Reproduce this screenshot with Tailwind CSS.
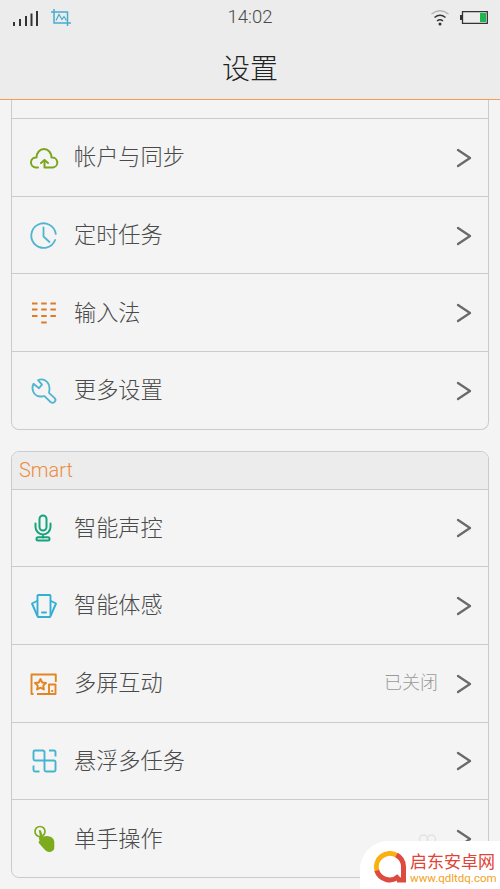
<!doctype html>
<html lang="zh-CN">
  <head>
    <meta charset="UTF-8" />
    <meta name="viewport" content="width=device-width, initial-scale=1.0" />
    <title>设置</title>
    <script src="https://cdn.jsdelivr.net/npm/@tailwindcss/browser@4"></script>
  </head>
  <body class="relative flex h-[889px] w-[500px] flex-col overflow-hidden bg-[#f4f4f4] font-['Roboto','Noto_Sans_CJK_SC',sans-serif] font-light text-[#4a4a4a]">
    <header class="h-[99px] shrink-0 bg-[#ececec]">
      <div class="grid h-[35px] grid-cols-3 items-center pr-3 pl-3">
        <div class="flex items-center gap-3">
          <svg class="h-4 w-[27px]" viewBox="0 0 27 16" fill="#333">
            <path d="M1 12h2v4H1zM7 9h2v7H7zM13 6h2v10h-2zM18.500 3.500h2v12.500h-2zM24 1h2v15h-2z" />
          </svg>
          <svg class="h-[17px] w-5" viewBox="0 0 20 17" fill="none" stroke="#46acd2" stroke-width="1.500">
            <path d="M0 3h16.500v14M3 0v14h17" />
            <path d="M5 11.500l3-6 3 5 2-3 2.500 4" stroke-width="1.200" />
          </svg>
        </div>
        <span class="text-center text-[18.500px]">14:02</span>
        <div class="flex items-center justify-end gap-[11px]">
          <svg class="h-4 w-[18px]" viewBox="0 0 18 16" fill="none" stroke="#333" stroke-width="1.500">
            <path d="M.5 4Q9-2.500 17.500 4" stroke="#b5b5b5" />
            <path d="M3.500 7.500Q9 3 14.500 7.500M6 11Q9 8.500 12 11" />
            <circle cx="9" cy="14" r="1.500" fill="#333" stroke="none" />
          </svg>
          <svg class="h-[13px] w-7" viewBox="0 0 28 13">
            <path d="M0 4h2v5H0z" fill="#333" />
            <path d="M2.500.7h24.800v11.600H2.500z" fill="none" stroke="#333" stroke-width="1.300" />
            <path d="M20 2h6v9h-6z" fill="#1fb64f" />
          </svg>
        </div>
      </div>
      <h1 class="mt-[14px] text-center text-[28px] leading-[42px] text-[#222]">设置</h1>
    </header>
    <div class="h-px shrink-0 bg-[#f79a55]"></div>

    <main class="flex flex-col gap-[21px] px-[11px]">
      <section class="h-[330px] rounded-b-lg border border-t-0 border-[#cbcbcb] text-[22.200px]">
        <div class="h-[19px] border-b border-[#cbcbcb]"></div>
        <div class="flex h-[77.6px] items-center border-b border-[#cbcbcb] pt-px pr-4 pl-[17px]">
          <svg class="size-[30px]" viewBox="0 0 30 30" fill="none" stroke="#7ba51c" stroke-width="2" stroke-linecap="round" stroke-linejoin="round">
            <path d="M9 24.500H6.500A4.700 4.700 0 0 1 7.500 14.500 7.500 8.500 0 0 1 22.500 14.500a4.700 4.700 0 0 1 1.500 10H15.500V17.500" />
            <path d="M12 20l3.500-3 3.500 3" />
          </svg>
          <span class="ml-[15px] flex-1">帐户与同步</span>
          <svg class="h-5 w-4" viewBox="0 0 16 20" fill="none" stroke="#6a6a6a" stroke-width="2.300" stroke-linecap="round" stroke-linejoin="round"><path d="M2 2l12 8-12 8" /></svg>
        </div>
        <div class="flex h-[77.6px] items-center border-b border-[#cbcbcb] pt-0.5 pr-4 pl-[17px]">
          <svg class="size-[30px]" viewBox="0 0 30 30" fill="none" stroke="#51b4d1" stroke-width="1.800" stroke-linecap="round" stroke-linejoin="round">
            <path d="M26.800 13A12.300 12.300 0 1 0 26.100 19" />
            <path d="M14.500 6.500v9l6 5.500" />
          </svg>
          <span class="ml-[15px] flex-1">定时任务</span>
          <svg class="h-5 w-4" viewBox="0 0 16 20" fill="none" stroke="#6a6a6a" stroke-width="2.300" stroke-linecap="round" stroke-linejoin="round"><path d="M2 2l12 8-12 8" /></svg>
        </div>
        <div class="flex h-[77.6px] items-center border-b border-[#cbcbcb] pt-0.5 pr-4 pl-[17px]">
          <svg class="size-[30px]" viewBox="0 0 30 30" fill="none" stroke="#dd7b2b" stroke-width="2" stroke-dasharray="5.500 3.700">
            <path d="M3 5.500h24M3 11.500h24M3 18h24M12.200 24.500h5.500" />
          </svg>
          <span class="ml-[15px] flex-1">输入法</span>
          <svg class="h-5 w-4" viewBox="0 0 16 20" fill="none" stroke="#6a6a6a" stroke-width="2.300" stroke-linecap="round" stroke-linejoin="round"><path d="M2 2l12 8-12 8" /></svg>
        </div>
        <div class="flex h-[77.6px] items-center pt-px pr-4 pl-[17px]">
          <svg class="size-[30px]" viewBox="0 0 30 30" fill="none" stroke="#51b4d1" stroke-width="1.800" stroke-linecap="round" stroke-linejoin="round">
            <path d="M9 4.200l4 4.500-3 3.500-5.500-4.500C2 13 4.500 19.800 11 20.500c2 .2 3.500-.7 4.500-.3l6 5.800c3 2.300 6.500-1.200 4.200-3.800l-5.500-5c-.6-1.200.6-3 .3-5.200C20 5 13.500 1.800 9 4.200z" />
          </svg>
          <span class="ml-[15px] flex-1">更多设置</span>
          <svg class="h-5 w-4" viewBox="0 0 16 20" fill="none" stroke="#6a6a6a" stroke-width="2.300" stroke-linecap="round" stroke-linejoin="round"><path d="M2 2l12 8-12 8" /></svg>
        </div>
      </section>

      <section class="h-[427px] overflow-hidden rounded-lg border border-[#cbcbcb] text-[22.200px]">
        <h2 class="h-[38px] border-b border-[#cbcbcb] bg-[#ececec] pl-[7px] text-xl leading-[37px] text-[#ec8c40]">Smart</h2>
        <div class="flex h-[77.4px] items-center border-b border-[#cbcbcb] pr-4 pl-[17px]">
          <svg class="size-[30px]" viewBox="0 0 30 30" fill="none" stroke="#17a37c" stroke-width="2" stroke-linecap="round" stroke-linejoin="round">
            <rect x="10.500" y="2.500" width="7" height="15" rx="3.500" />
            <path d="M6.500 10.500v3.500a7.500 7.500 0 0 0 15 0v-3.500M14 21.500v3" />
            <rect x="7.500" y="24.300" width="13" height="3.200" rx="1.500" />
          </svg>
          <span class="ml-[15px] flex-1">智能声控</span>
          <svg class="h-5 w-4" viewBox="0 0 16 20" fill="none" stroke="#6a6a6a" stroke-width="2.300" stroke-linecap="round" stroke-linejoin="round"><path d="M2 2l12 8-12 8" /></svg>
        </div>
        <div class="flex h-[77.6px] items-center border-b border-[#cbcbcb] pr-4 pl-[17px]">
          <svg class="size-[30px]" viewBox="0 0 30 30" fill="none" stroke="#35aed4" stroke-width="1.900" stroke-linecap="round" stroke-linejoin="round">
            <rect x="8.500" y="4" width="13" height="22" rx=".8" />
            <path d="M8 10l-5 2.500 5 11.500M22 10l5 2.500-5 11.500M13 21.500h4" />
          </svg>
          <span class="ml-[15px] flex-1">智能体感</span>
          <svg class="h-5 w-4" viewBox="0 0 16 20" fill="none" stroke="#6a6a6a" stroke-width="2.300" stroke-linecap="round" stroke-linejoin="round"><path d="M2 2l12 8-12 8" /></svg>
        </div>
        <div class="flex h-[77.6px] items-center border-b border-[#cbcbcb] pt-px pr-4 pl-[17px]">
          <svg class="size-[30px]" viewBox="0 0 30 30" fill="none" stroke="#e28522" stroke-width="1.900" stroke-linejoin="round">
            <path d="M4.500 25H2.500V5.500h24.300V13M8 25h12" />
            <path d="M11.500 10l1.700 3.500 3.800.5-2.800 2.600.7 3.900-3.400-1.900-3.400 1.900.7-3.900L6 14l3.800-.5z" />
            <rect x="20" y="15.500" width="6.500" height="9.500" />
            <path d="M22.200 22h2" />
          </svg>
          <span class="ml-[15px] flex-1">多屏互动</span>
          <span class="mr-[18px] pb-px text-lg leading-6 text-[#999]">已关闭</span>
          <svg class="h-5 w-4" viewBox="0 0 16 20" fill="none" stroke="#6a6a6a" stroke-width="2.300" stroke-linecap="round" stroke-linejoin="round"><path d="M2 2l12 8-12 8" /></svg>
        </div>
        <div class="flex h-[77.6px] items-center border-b border-[#cbcbcb] pt-px pr-4 pl-[17px]">
          <svg class="size-[30px]" viewBox="0 0 30 30" fill="none" stroke="#45b4d2" stroke-width="1.900">
            <path d="M15.500 14.500H6a1.500 1.500 0 0 1-1.500-1.500V6A1.500 1.500 0 0 1 6 4.500h8A1.500 1.500 0 0 1 15.500 6zM15.500 14.500H25a1.500 1.500 0 0 1 1.500 1.500v8a1.500 1.500 0 0 1-1.500 1.500h-8a1.500 1.500 0 0 1-1.500-1.500z" />
            <path d="M20 4.500h5A1.500 1.500 0 0 1 26.500 6v4.500M4.500 19.500V24A1.500 1.500 0 0 0 6 25.500h4.500" />
          </svg>
          <span class="ml-[15px] flex-1">悬浮多任务</span>
          <svg class="h-5 w-4" viewBox="0 0 16 20" fill="none" stroke="#6a6a6a" stroke-width="2.300" stroke-linecap="round" stroke-linejoin="round"><path d="M2 2l12 8-12 8" /></svg>
        </div>
        <div class="flex h-[77.6px] items-center pt-px pr-4 pl-[17px]">
          <svg class="size-[30px]" viewBox="0 0 30 30" fill="#7dab1e">
            <circle cx="11" cy="7.500" r="5" fill="none" stroke="#7dab1e" stroke-width="1.700" />
            <path d="M9.800 6.300q1.300-.8 2.200.5l2 5.700c2.500-.8 5.500-.8 7.500.3 2.500 1.400 3.700 3 3.800 5.200V24c0 2-2.500 4-5 4-2 0-3.500-1-4.500-2.200L10.200 19.500c-1-1.500-.5-2.500.5-3l-1-2.500 1.300-1.500z" />
          </svg>
          <span class="ml-[15px] flex-1">单手操作</span>
          <svg class="h-5 w-4" viewBox="0 0 16 20" fill="none" stroke="#6a6a6a" stroke-width="2.300" stroke-linecap="round" stroke-linejoin="round"><path d="M2 2l12 8-12 8" /></svg>
        </div>
      </section>
    </main>

    <!-- site badge over the bottom corner -->
    <svg class="absolute top-[834px] left-[418px] h-3 w-[19px]" viewBox="0 0 19 12" fill="none" stroke="#e2e2e2" stroke-width="1.500">
      <circle cx="5.500" cy="5" r="4" /><circle cx="13.500" cy="5" r="4" />
    </svg>
    <div class="absolute right-0 bottom-0 flex h-12 w-[140px] gap-[3px] rounded-tl-[28px] bg-white pt-[9px] pl-[13px]">
      <svg class="h-[33px] w-[34px] shrink-0" viewBox="0 0 34 33" fill="none" stroke-width="5">
        <path d="M4 21A13.500 13.500 0 0 1 24 5.500" stroke="#f9b010" />
        <path d="M23.500 5A13.500 13.500 0 0 1 30.500 16.500V30H24" stroke="#df4a3e" />
        <path d="M3.700 20.500A13.500 13.500 0 0 0 26 26" stroke="#df4a3e" />
      </svg>
      <div class="flex flex-col">
        <span class="text-[17px] leading-[25px] font-normal whitespace-nowrap text-[#df4438]">启东安卓网</span>
        <span class="text-[11.500px] leading-[6px] font-normal whitespace-nowrap text-[#f3a21d]">www.qdltdq.com</span>
      </div>
    </div>
  </body>
</html>
